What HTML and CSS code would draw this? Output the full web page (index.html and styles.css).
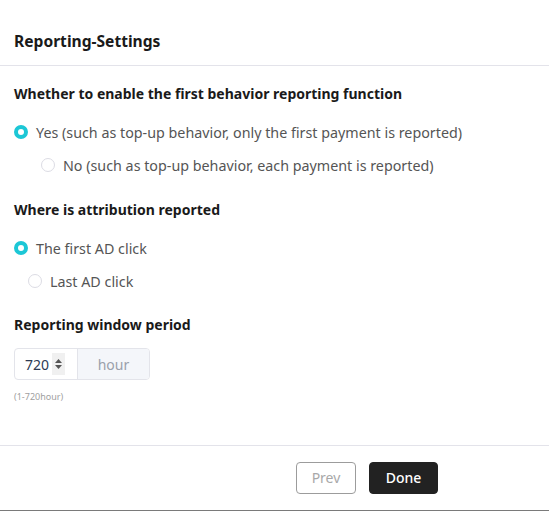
FILE: index.html
```html
<!DOCTYPE html>
<html>
<head>
<meta charset="utf-8">
<link rel="stylesheet" href="styles.css">
</head>
<body>
<div class="modal">
  <div class="header">Reporting-Settings</div>
  <div class="body">
    <div class="section-title">Whether to enable the first behavior reporting function</div>
    <div class="radios first">
      <label class="radio checked"><span class="dot"></span><span class="label">Yes (such as top-up behavior, only the first payment is reported)</span></label>
      <label class="radio indent-a"><span class="dot"></span><span class="label">No (such as top-up behavior, each payment is reported)</span></label>
    </div>
    <div class="section-title s2">Where is attribution reported</div>
    <div class="radios">
      <label class="radio checked"><span class="dot"></span><span class="label">The first AD click</span></label>
      <label class="radio indent-b"><span class="dot"></span><span class="label">Last AD click</span></label>
    </div>
    <div class="section-title s3">Reporting window period</div>
    <div class="input-group">
      <div class="num">
        <span class="val">720</span>
        <span class="spin">
          <svg width="9" height="14" viewBox="0 0 9 14"><path d="M1 6 L4.5 2 L8 6 Z" fill="#555"/><path d="M1 8 L4.5 12 L8 8 Z" fill="#555"/></svg>
        </span>
      </div>
      <div class="addon">hour</div>
    </div>
    <div class="hint">(1-720hour)</div>
  </div>
  <div class="footer">
    <button class="btn prev">Prev</button>
    <button class="btn done">Done</button>
  </div>
</div>
</body>
</html>
```
FILE: styles.css
```css
html, body { margin: 0; padding: 0; background: #fff; }
body { font-family: "Noto Sans", "Open Sans", sans-serif; color: #222; width: 549px; height: 511px; overflow: hidden; }
.modal { height: 511px; border-bottom: 1px solid #7a7a7a; box-sizing: border-box; display: flex; flex-direction: column; }
.header { height: 65px; border-bottom: 1px solid #e3e3ea; box-sizing: content-box; padding-left: 14px; font-size: 15.6px; font-weight: 700; line-height: 82px; color: #1a1a1a; }
.body { flex: 1; padding: 0 14px; }
.section-title { font-size: 14px; font-weight: 700; color: #1a1a1a; margin-top: 18px; line-height: 20px; }
.section-title.s2 { margin-top: 25px; }
.section-title.s3 { margin-top: 24px; }
.radios { display: flex; flex-direction: column; margin-top: 18px; gap: 13px; }
.radio { display: flex; align-items: center; height: 20px; font-size: 14.3px; color: #555; }
.radio .dot { width: 14px; height: 14px; border-radius: 50%; border: 1px solid #dcdce4; box-sizing: border-box; margin-right: 8px; flex: none; background: #fff; }
.radio.checked .dot { border: 4px solid #1cc7d6; background: #fff; }
.indent-a { margin-left: 27px; }
.indent-b { margin-left: 14px; }
.input-group { display: flex; margin-top: 13px; width: 136px; height: 32px; border: 1px solid #e3e4ea; border-radius: 4px; box-sizing: border-box; overflow: hidden; }
.num { width: 63px; display: flex; align-items: center; border-right: 1px solid #e3e4ea; padding-left: 10px; box-sizing: border-box; }
.val { font-size: 14px; color: #2c3a55; }
.spin { margin-left: 3px; width: 13px; height: 22px; background: #f0f0f0; display: flex; align-items: center; justify-content: center; }
.addon { flex: 1; background: #f4f6fa; color: #9aa0ab; font-size: 14px; display: flex; align-items: center; justify-content: center; }
.hint { font-size: 9px; color: #a0a0a0; margin-top: 10px; }
.footer { border-top: 1px solid #e3e3ea; height: 65px; display: flex; justify-content: flex-end; align-items: flex-start; padding: 16px 111px 0 0; box-sizing: border-box; gap: 13px; }
.btn { height: 32px; border-radius: 4px; font-family: inherit; font-size: 14px; line-height: 1; padding: 0; box-sizing: border-box; cursor: pointer; }
.prev { width: 60px; background: #fff; border: 1px solid #9c9c9c; color: #a8a8a8; }
.done { width: 69px; background: #222; border: 1px solid #222; color: #fff; font-weight: 500; }
```
